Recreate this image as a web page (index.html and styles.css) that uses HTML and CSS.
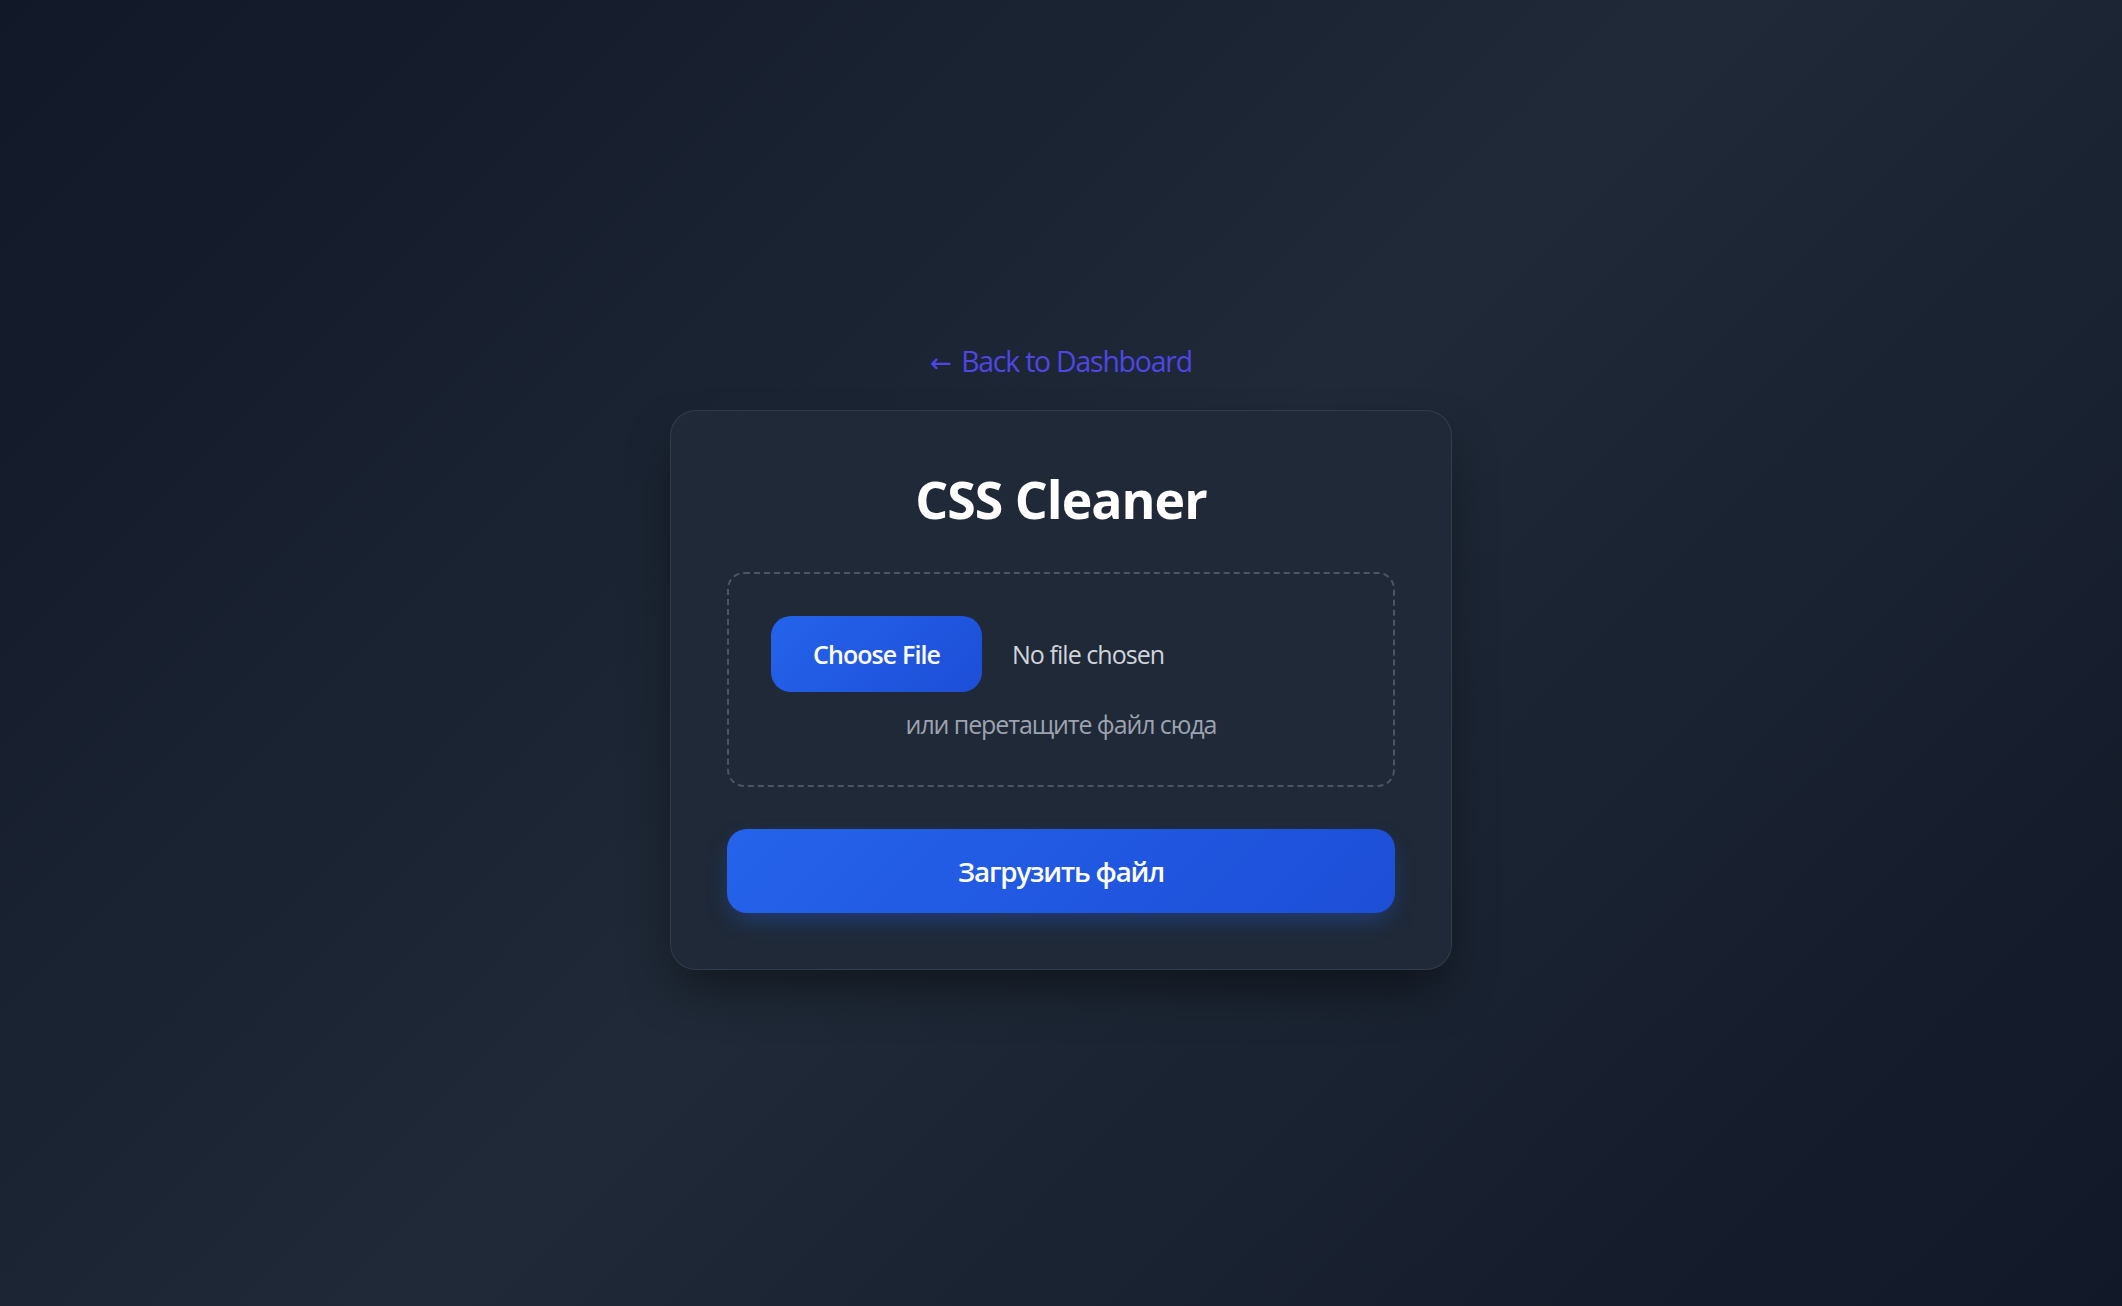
FILE: index.html
```html
<!DOCTYPE html>
<html lang="ru">
<head>
<meta charset="utf-8">
<title>CSS Cleaner</title>
<link rel="stylesheet" href="styles.css">
</head>
<body>
  <main class="page">
    <a class="back-link" href="#"><span class="arrow">←</span> Back to Dashboard</a>
    <section class="card">
      <h1 class="title">CSS Cleaner</h1>
      <form class="upload-form">
        <div class="dropzone">
          <label class="file-row">
            <span class="file-button">Choose File</span>
            <span class="file-name">No file chosen</span>
          </label>
          <p class="hint">или перетащите файл сюда</p>
        </div>
        <button type="button" class="submit">Загрузить файл</button>
      </form>
    </section>
  </main>
</body>
</html>
```
FILE: styles.css
```css
* {
  box-sizing: border-box;
}

html, body {
  margin: 0;
  padding: 0;
}

body {
  min-height: 100vh;
  background: linear-gradient(135deg, #111827 0%, #1f2937 50%, #111827 100%);
  font-family: "Open Sans", "Noto Sans", sans-serif;
  color: #fff;
}

.page {
  min-height: 100vh;
  display: flex;
  flex-direction: column;
  align-items: center;
  justify-content: center;
  padding-top: 2px;
}

.back-link {
  font-size: 28.4px;
  line-height: 43px;
  letter-spacing: -1.2px;
  color: #4f46e5;
  text-decoration: none;
  padding-top: 2px;
  margin-bottom: 25px;
}

.arrow {
  font-family: "DejaVu Sans", sans-serif;
  font-size: 26px;
  letter-spacing: 0;
  margin-right: 3px;
}

.card {
  width: 782px;
  padding: 56px;
  background: #1f2937;
  border: 1px solid rgba(75, 85, 99, 0.45);
  border-radius: 26px;
  box-shadow: 0 25px 50px -12px rgba(0, 0, 0, 0.5);
}

.title {
  margin: 0 0 41px;
  font-size: 51.8px;
  line-height: 64.8px;
  letter-spacing: -1px;
  font-weight: 700;
  text-align: center;
  color: #fff;
}

.upload-form {
  display: flex;
  flex-direction: column;
  gap: 42px;
  margin: 0;
}

.dropzone {
  border: 2px dashed #4b5563;
  border-radius: 17px;
  padding: 42px 42px 41px;
}

.file-row {
  display: flex;
  align-items: center;
  gap: 30px;
  cursor: pointer;
}

.file-button {
  display: inline-flex;
  align-items: center;
  justify-content: center;
  width: 211px;
  height: 76px;
  border-radius: 20px;
  background: linear-gradient(135deg, #2563eb, #1d4ed8);
  color: #fff;
  font-size: 25px;
  font-weight: 600;
  letter-spacing: -0.9px;
}

.file-name {
  font-size: 25px;
  letter-spacing: -0.95px;
  color: #d1d5db;
}

.hint {
  margin: 12px 0 0;
  font-size: 25px;
  line-height: 40px;
  letter-spacing: -1.1px;
  text-align: center;
  color: #9ca3af;
}

.submit {
  height: 84px;
  width: 100%;
  border: none;
  border-radius: 20px;
  background: linear-gradient(135deg, #2563eb, #1d4ed8);
  color: #fff;
  font-family: inherit;
  font-size: 27.8px;
  font-weight: 600;
  letter-spacing: -1.2px;
  cursor: pointer;
  box-shadow: 0 10px 25px -5px rgba(37, 99, 235, 0.4);
}
```
